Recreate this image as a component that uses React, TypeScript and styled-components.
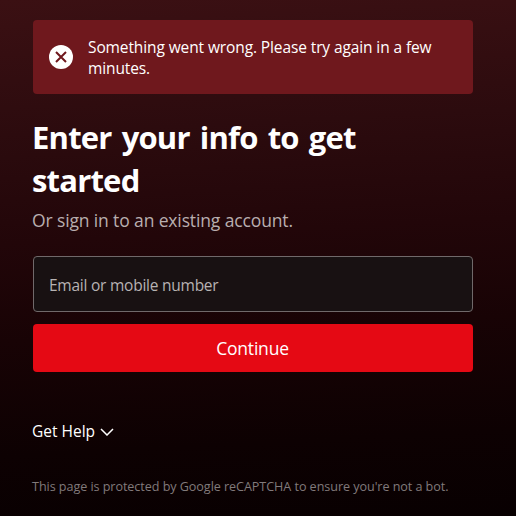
import React from 'react';
import styled, { createGlobalStyle } from 'styled-components';

const GlobalStyle = createGlobalStyle`
  * { box-sizing: border-box; }
  html, body { margin: 0; padding: 0; background: #080001; }
  body, input, button { font-family: 'Open Sans', 'Noto Sans', sans-serif; }
`;

const Page = styled.main`
  height: 516px;
  padding: 20px 43px 0 33px;
  overflow: hidden;
  color: #fff;
  background: linear-gradient(177deg, #3b1013 0%, #2c0b0e 25%, #220609 45%, #180305 63%, #0d0102 84%, #080001 100%);
`;

const Alert = styled.div`
  display: flex;
  align-items: center;
  gap: 15px;
  height: 74px;
  padding: 0 16px;
  border-radius: 4px;
  background: #6f181d;
`;

const AlertIcon = styled.svg`
  flex: none;
  width: 24px;
  height: 24px;
`;

const AlertText = styled.p`
  margin: 0;
  padding-top: 2px;
  font-size: 15.5px;
  line-height: 21px;
  letter-spacing: -0.11px;
`;

const Title = styled.h1`
  width: 350px;
  margin: 22px 0 0 -1px;
  font-size: 31px;
  font-weight: 700;
  line-height: 43px;
  letter-spacing: -0.8px;
  word-spacing: 2.8px;
`;

const Subtitle = styled.p`
  margin: 5px 0 0 -1px;
  color: #b9aeaf;
  font-size: 17.5px;
  line-height: 27px;
  letter-spacing: -0.13px;
`;

const Form = styled.form`
  display: grid;
  gap: 12px;
  margin-top: 22px;
`;

const Field = styled.input`
  width: 100%;
  height: 56px;
  padding: 2px 15px 0;
  border: 1px solid #70696a;
  border-radius: 4px;
  background: #181112;
  color: #fff;
  font-size: 15.5px;
  letter-spacing: -0.24px;
  outline: none;
  &::placeholder { color: #b7b3b3; opacity: 1; }
`;

const Submit = styled.button`
  height: 48px;
  padding: 0 1px 0 0;
  border: 0;
  border-radius: 4px;
  background: #e50914;
  color: #fff;
  font-size: 17.5px;
  letter-spacing: -0.2px;
`;

const HelpButton = styled.button`
  display: flex;
  align-items: center;
  gap: 5px;
  height: 24px;
  margin: 48px 0 0 -1px;
  padding: 0;
  border: 0;
  background: none;
  color: #fff;
  font-size: 15.5px;
  line-height: 22px;
  letter-spacing: 0;
`;

const HelpLabel = styled.span`
  padding-bottom: 2px;
`;

const Footer = styled.p`
  margin: 33px 0 0 -1px;
  color: #817a7b;
  font-size: 12.6px;
  line-height: 20px;
  letter-spacing: -0.06px;
  white-space: nowrap;
`;

export default function App() {
  return (
    <>
      <GlobalStyle />
      <Page>
        <Alert role="alert">
          <AlertIcon viewBox="0 0 24 24" aria-hidden="true">
            <circle cx="12" cy="12" r="12" fill="#fff" />
            <path d="M7 7l10 10M17 7L7 17" stroke="#6f181d" strokeWidth="2" fill="none" />
          </AlertIcon>
          <AlertText>Something went wrong. Please try again in a few minutes.</AlertText>
        </Alert>
        <Title>Enter your info to get started</Title>
        <Subtitle>Or sign in to an existing account.</Subtitle>
        <Form>
          <Field type="text" placeholder="Email or mobile number" />
          <Submit type="button">Continue</Submit>
        </Form>
        <HelpButton type="button">
          <HelpLabel>Get Help</HelpLabel>
          <svg width="14" height="8" viewBox="0 0 14 8" aria-hidden="true">
            <path d="M1 1l6 6 6-6" fill="none" stroke="#fff" strokeWidth="1.5" />
          </svg>
        </HelpButton>
        <Footer>This page is protected by Google reCAPTCHA to ensure you're not a bot.</Footer>
      </Page>
    </>
  );
}
